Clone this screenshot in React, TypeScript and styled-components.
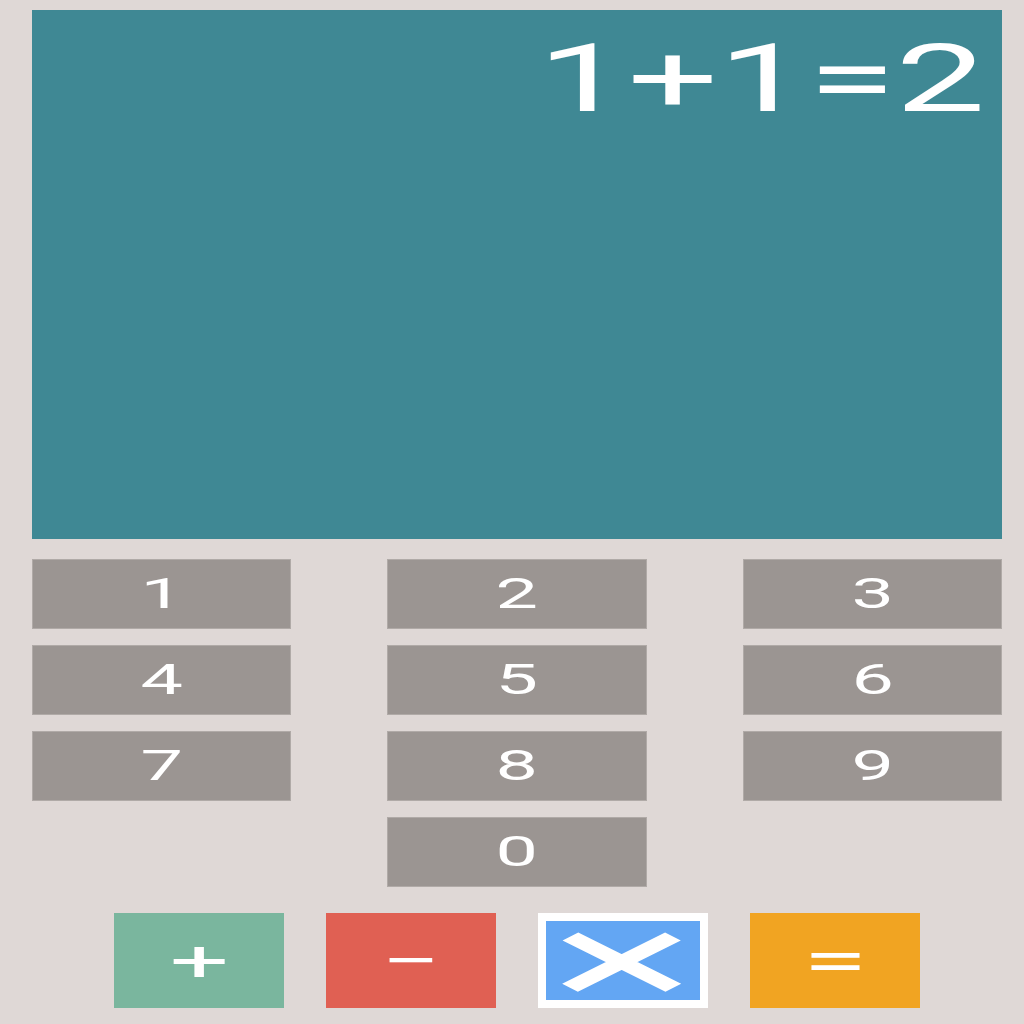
import React from "react";
import styled, { createGlobalStyle } from "styled-components";

const Global = createGlobalStyle`
  html, body { margin: 0; padding: 0; background: #dfd8d6; }
  body { font-family: Roboto, "Noto Sans", sans-serif; }
`;

const Page = styled.div`
  width: 970px;
  margin-left: 32px;
  padding-top: 10px;
  height: 1014px;
  display: flex;
  flex-direction: column;
`;

const Display = styled.div`
  height: 529px;
  background: #3f8894;
  display: flex;
  justify-content: flex-end;
  align-items: flex-start;
  padding: 22px 17px 0 0;
  box-sizing: border-box;
  overflow: hidden;
`;

const Stretch = styled.span<{ $sx: number; $sy?: number; $size?: number }>`
  display: inline-block;
  transform: scale(${(p) => p.$sx}, ${(p) => p.$sy ?? 1});
  transform-origin: center;
  white-space: nowrap;
  font-size: ${(p) => (p.$size ? `${p.$size}px` : "inherit")};
  line-height: 1;
`;

const Result = styled.div`
  color: #ffffff;
  font-size: 94px;
  line-height: 1;
  font-weight: 400;
  transform: scaleX(1.7);
  transform-origin: right top;
  white-space: nowrap;
`;

const Keypad = styled.div`
  margin-top: 20px;
  display: grid;
  grid-template-columns: repeat(3, 1fr);
  grid-auto-rows: 70px;
  column-gap: 96px;
  row-gap: 16px;
`;

const Key = styled.div<{ $col?: number }>`
  grid-column: ${(p) => (p.$col ? `${p.$col}` : "auto")};
  background: #9b9592;
  border: 1px solid #b0aaa7;
  box-sizing: border-box;
  color: #fff;
  font-size: 42px;
  display: flex;
  align-items: center;
  justify-content: center;
  line-height: 1;
`;

const Ops = styled.div`
  margin-top: 26px;
  display: flex;
  justify-content: center;
  gap: 42px;
`;

const Op = styled.div<{ $bg: string; $framed?: boolean }>`
  width: 170px;
  height: 95px;
  background: ${(p) => p.$bg};
  border: ${(p) => (p.$framed ? "8px solid #ffffff" : "none")};
  box-sizing: border-box;
  color: #fff;
  display: flex;
  align-items: center;
  justify-content: center;
  font-size: 58px;
  line-height: 1;
`;

const digits = ["1", "2", "3", "4", "5", "6", "7", "8", "9"];

export default function App() {
  return (
    <>
      <Global />
      <Page>
        <Display>
          <Result>1+1=2</Result>
        </Display>
        <Keypad>
          {digits.map((d) => (
            <Key key={d}>
              <Stretch $sx={1.8}>{d}</Stretch>
            </Key>
          ))}
          <Key $col={2}>
            <Stretch $sx={1.8}>0</Stretch>
          </Key>
        </Keypad>
        <Ops>
          <Op $bg="#7ab69e">
            <Stretch $sx={1.8}>+</Stretch>
          </Op>
          <Op $bg="#e06053">
            <Stretch $sx={1.8}>−</Stretch>
          </Op>
          <Op $bg="#63a6f3" $framed>
            <Stretch $sx={4.1} $sy={2} $size={66}>×</Stretch>
          </Op>
          <Op $bg="#f1a422">
            <Stretch $sx={1.9} $size={62}>=</Stretch>
          </Op>
        </Ops>
      </Page>
    </>
  );
}
